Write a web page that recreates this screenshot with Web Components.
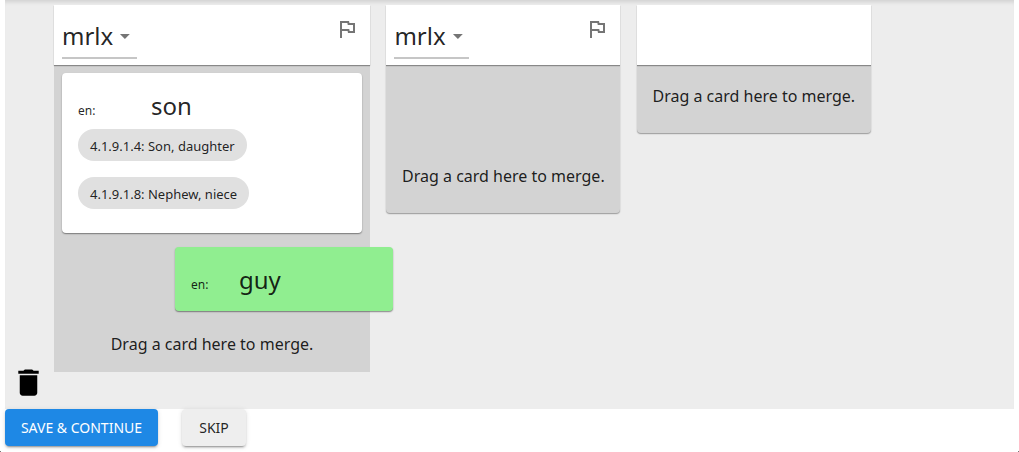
<!DOCTYPE html>
<html lang="en"><head><meta charset="utf-8"><title>Merge duplicates</title>
<style>
html,body{margin:0;background:#fff}
body{font-family:"Noto Sans",sans-serif;font-size:16px;line-height:24px;color:rgba(0,0,0,.87);height:452px;overflow:hidden}
</style></head><body>
<merge-page></merge-page>
<script>
const define=(name,html)=>customElements.define(name,class extends HTMLElement{
  constructor(){super();this.attachShadow({mode:'open'}).innerHTML=html;}
});
define('flag-icon',`<style>:host{display:block;width:24px;height:24px;margin-top:2.400px}svg{display:block;fill:#757575}</style>
<svg width="24" height="24" viewBox="0 0 24 24"><path d="M12.36 6l.4 2H18v6h-3.36l-.4-2H7V6h5.36M14 4H5v17h2v-7h5.6l.4 2h7V6h-5.6L14 4z"/></svg>`);
define('trash-icon',`<style>:host{display:block;width:35px;height:35px}svg{display:block}</style>
<svg width="35" height="35" viewBox="0 0 24 24"><path d="M6 19c0 1.100.9 2 2 2h8c1.100 0 2-.9 2-2V7H6v12zM19 4h-3.500l-1-1h-5l-1 1H5v2h14V4z"/></svg>`);
define('vern-select',`<style>:host{display:flex;box-sizing:border-box;width:75px;height:45px;border-bottom:2px solid #c6c6c6;font-size:24px;line-height:32px;padding-top:6px}
svg{display:block;margin:4px 0 0 auto;fill:#757575}</style>
<span><slot></slot></span><svg width="24" height="24" viewBox="0 0 24 24"><path d="M7 10l5 5 5-5z"/></svg>`);
define('word-column',`<style>:host{display:flex;flex-direction:column;flex:none;box-sizing:border-box}
header{display:flex;justify-content:space-between;box-sizing:border-box;height:60px;padding:9px 11px 0 8px;background:#fff;box-shadow:0 1px 1px rgba(0,0,0,.28),0 1px 1px rgba(0,0,0,.1);position:relative}
.body{background:#d3d3d3;flex:1;display:flex;flex-direction:column;border-radius:var(--radius,0);box-shadow:var(--shadow,none)}
p{margin:auto 0 var(--hint-gap,25px);text-align:center}</style>
<header><slot name="vern"></slot><slot name="flag"></slot></header><div class="body"><slot></slot><p>Drag a card here to merge.</p></div>`);
define('sense-card',`<style>:host{display:block;box-sizing:border-box;border-radius:4px;background:var(--card,#fff);padding:17px 16px 15px;box-shadow:0 1px 1px rgba(0,0,0,.27),0 1px 2px rgba(0,0,0,.2)}
.gloss{display:flex;align-items:baseline;height:32px}
.lang{font-size:12px;width:var(--lang-width)}.word{font-size:24px;line-height:32px}</style>
<div class="gloss"><span class="lang">en:</span><span class="word"><slot name="word"></slot></span></div><slot name="domains"></slot>`);
define('domain-list',`<style>:host{display:flex;flex-direction:column;align-items:flex-start;gap:16px;padding-top:7px}</style><slot></slot>`);
define('domain-chip',`<style>:host{display:block;height:32px;line-height:34px;border-radius:16px;background:#e0e0e0;padding:0 12px;font-size:13px;white-space:nowrap}</style><slot></slot>`);
define('action-button',`<style>:host{display:block;box-sizing:border-box;height:37px;border-radius:4px;background:var(--bg,#eee);color:var(--fg,rgba(0,0,0,.87));padding:0 10px;text-align:center;font-size:14px;font-weight:450;line-height:38px;white-space:nowrap;box-shadow:0 3px 1px -2px rgba(0,0,0,.2),0 2px 2px rgba(0,0,0,.14),0 1px 5px rgba(0,0,0,.12)}</style><slot></slot>`);
define('merge-page',`<style>
:host{display:block;padding:0 5px;position:relative;height:452px;box-sizing:border-box}
:host::before,:host::after{content:"";position:absolute;bottom:0;width:1px;height:1px;background:#777}
:host::before{left:0}:host::after{right:0}
.board{height:409px;background:#ededed;box-shadow:inset 0 5px 4px -3px rgba(0,0,0,.12);display:flex;align-items:flex-start;box-sizing:border-box;padding-top:5.300px}
aside{width:49px;height:395px;display:flex;align-items:flex-end;box-sizing:border-box;padding:0 0 .4px 6px}
.cols{display:flex;align-items:flex-start;gap:16.400px}
.one{width:316px;height:367px;--hint-gap:16px}.two,.three{width:234px;--radius:0 0 4px 4px;--shadow:0 1px 1px rgba(0,0,0,.25),0 1px 2px rgba(0,0,0,.13)}
.two{height:208px}.three{height:128px}
.son{margin:8px 8px 0;height:160px;--lang-width:73px}
.drag{position:absolute;left:175px;top:247.400px;width:218px;height:64px;--card:#90ee90;--lang-width:48px}
.actions{display:flex;gap:24px}
.save{width:153px;--bg:#1e88e5;--fg:#fff}.skip{width:64px}
</style>
<div class="board"><aside><trash-icon></trash-icon></aside><div class="cols">
<word-column class="one"><vern-select slot="vern">mrlx</vern-select><flag-icon slot="flag"></flag-icon>
<sense-card class="son"><span slot="word">son</span><domain-list slot="domains"><domain-chip>4.1.9.1.4: Son, daughter</domain-chip><domain-chip>4.1.9.1.8: Nephew, niece</domain-chip></domain-list></sense-card></word-column>
<word-column class="two"><vern-select slot="vern">mrlx</vern-select><flag-icon slot="flag"></flag-icon></word-column>
<word-column class="three"></word-column>
</div></div>
<sense-card class="drag"><span slot="word">guy</span></sense-card>
<div class="actions"><action-button class="save">SAVE &amp; CONTINUE</action-button><action-button class="skip">SKIP</action-button></div>`);
</script></body></html>
